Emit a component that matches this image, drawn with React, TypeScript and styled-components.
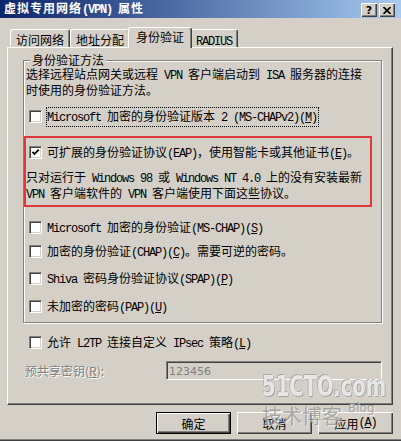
import React from 'react';
import styled, { createGlobalStyle, css } from 'styled-components';

const FACE = '#d4d0c8';

const GlobalStyle = createGlobalStyle`
  html, body {
    margin: 0;
    padding: 0;
    background: ${FACE};
  }
  body {
    font-family: "Noto Sans CJK SC", "DejaVu Sans", sans-serif;
    font-size: 12px;
  }
`;

const Window = styled.div`
  position: relative;
  width: 401px;
  height: 441px;
  overflow: hidden;
  display: flex;
  flex-direction: column;
  background: ${FACE};
  box-shadow: inset 0 -1px 0 #404040, inset 0 -2px 0 #808080;
  color: #000;
  font-family: "Noto Sans CJK SC", sans-serif;
  font-size: 12px;
  line-height: 13px;
`;

const TitleBar = styled.div`
  flex: none;
  height: 18px;
  display: flex;
  align-items: center;
  padding: 0 6px 0 4px;
  background: linear-gradient(to right, #0a246a, #a6caf0);
`;

const Title = styled.div`
  flex: 1;
  color: #fff;
  font-weight: bold;
  letter-spacing: 1px;
  white-space: nowrap;
`;

const CaptionButtons = styled.div`
  display: flex;
  gap: 2px;
  margin-top: 2px;
`;

const CaptionButton = styled.div`
  width: 16px;
  height: 14px;
  box-sizing: border-box;
  display: flex;
  align-items: center;
  justify-content: center;
  background: ${FACE};
  box-shadow: inset 1px 1px 0 #fff, inset -1px -1px 0 #404040, inset -2px -2px 0 #808080;
  font-family: "DejaVu Sans", sans-serif;
  font-weight: bold;
  font-size: 11px;
  line-height: 11px;
`;

const TabRow = styled.div`
  flex: none;
  position: relative;
  z-index: 1;
  display: flex;
  align-items: flex-end;
  height: 20px;
  margin-top: 9px;
  padding-left: 10px;
`;

const Tab = styled.div<{ $active?: boolean }>`
  height: 18px;
  box-sizing: border-box;
  padding: 3px 5px 0;
  background: ${FACE};
  border-top: 1px solid #fff;
  border-left: 1px solid #fff;
  border-right: 1px solid #404040;
  border-radius: 3px 3px 0 0;
  box-shadow: inset -1px 0 0 #808080;
  white-space: nowrap;
  ${p =>
    p.$active &&
    css`
      position: relative;
      z-index: 2;
      height: 21px;
      margin: 0 -2px -1px;
      padding: 2px 7px 0;
    `}
`;

const Panel = styled.div`
  flex: none;
  height: 358px;
  box-sizing: border-box;
  margin: 0 8px 0 7px;
  padding: 12px 10px 0 15px;
  display: flex;
  flex-direction: column;
  border-top: 1px solid #fff;
  border-left: 1px solid #fff;
  border-right: 1px solid #404040;
  border-bottom: 1px solid #404040;
  box-shadow: inset -1px -1px 0 #808080;
`;

const GroupBox = styled.div`
  position: relative;
  display: flex;
  flex-direction: column;
  padding: 6px 0 7px;
  border: 1px solid #808080;
  box-shadow: inset 1px 1px 0 #fff, 1px 1px 0 #fff;
`;

const Legend = styled.span`
  position: absolute;
  top: -7px;
  left: 6px;
  padding: 0 2px;
  line-height: 12px;
  background: ${FACE};
  white-space: nowrap;
`;

const Text = styled.div<{ $ml?: number; $mt?: number }>`
  margin-left: ${p => p.$ml ?? 0}px;
  margin-top: ${p => p.$mt ?? 0}px;
  white-space: nowrap;
`;

const CheckRow = styled.div<{ $mt?: number; $ml?: number }>`
  display: flex;
  align-items: center;
  gap: 4px;
  height: 17px;
  margin-top: ${p => p.$mt ?? 0}px;
  padding-left: ${p => p.$ml ?? 5}px;
`;

const Box = styled.span`
  flex: none;
  width: 13px;
  height: 13px;
  box-sizing: border-box;
  display: flex;
  align-items: center;
  justify-content: center;
  background: #fff;
  border-top: 1px solid #808080;
  border-left: 1px solid #808080;
  border-right: 1px solid #fff;
  border-bottom: 1px solid #fff;
  box-shadow: inset 1px 1px 0 #404040, inset -1px -1px 0 ${FACE};
`;

const Label = styled.span<{ $focus?: boolean }>`
  padding: 1px 1px 1px 0;
  border: 1px ${p => (p.$focus ? 'dotted #000' : 'solid transparent')};
  white-space: nowrap;
`;

const Highlight = styled.div`
  width: 348px;
  box-sizing: border-box;
  margin-top: 11px;
  padding: 6px 0 3px;
  border: 2px solid #e0393c;
`;

const KeyRow = styled.div`
  display: flex;
  align-items: center;
  justify-content: space-between;
  margin-top: 10px;
  padding-left: 2px;
`;

const KeyLabel = styled.span`
  color: #808080;
  text-shadow: 1px 1px 0 #fff;
`;

const KeyInput = styled.div`
  width: 216px;
  height: 19px;
  box-sizing: border-box;
  padding: 3px 2px 0;
  border-top: 1px solid #808080;
  border-left: 1px solid #808080;
  border-right: 1px solid #fff;
  border-bottom: 1px solid #fff;
  box-shadow: inset 1px 1px 0 #404040, inset -1px -1px 0 ${FACE};
  color: #808080;
  font-family: "DejaVu Sans", sans-serif;
  font-size: 11px;
  line-height: 13px;
`;

const ButtonRow = styled.div`
  display: flex;
  justify-content: flex-end;
  gap: 6px;
  margin-top: 7px;
  padding-right: 8px;
`;

const Button = styled.div<{ $default?: boolean }>`
  width: 75px;
  height: 22px;
  box-sizing: border-box;
  display: flex;
  align-items: center;
  justify-content: center;
  background: ${FACE};
  box-shadow: inset 1px 1px 0 #fff, inset -1px -1px 0 #404040, inset -2px -2px 0 #808080;
  ${p =>
    p.$default &&
    css`
      border: 1px solid #000;
    `}
`;

const Lat = styled.span<{ $u?: boolean }>`
  font-family: "Liberation Mono", monospace;
  font-size: 12px;
  letter-spacing: -1.2px;
  text-decoration: ${p => (p.$u ? 'underline' : 'none')};
`;

const Watermark = styled.div`
  position: absolute;
  left: 262px;
  top: 373px;
  z-index: 5;
  pointer-events: none;
  display: flex;
  flex-direction: column;
  gap: 4px;
`;

const WmLogo = styled.div`
  font-family: "DejaVu Sans", sans-serif;
  font-weight: bold;
  font-size: 28px;
  line-height: 28px;
  color: rgba(244, 244, 244, 0.85);
  text-shadow: -1px -1px 0 rgba(140, 140, 140, 0.6), 1px 1px 0 rgba(130, 130, 130, 0.6);
  transform: scaleX(0.7);
  transform-origin: left center;
  white-space: nowrap;
`;

const WmSub = styled.div`
  display: flex;
  align-items: flex-start;
  gap: 6px;
`;

const WmBlog = styled.span<{ $small?: boolean }>`
  font-family: ${p => (p.$small ? '"DejaVu Sans", sans-serif' : '"Noto Sans CJK SC", sans-serif')};
  font-size: ${p => (p.$small ? 12 : 20)}px;
  line-height: ${p => (p.$small ? 12 : 22)}px;
  margin-top: ${p => (p.$small ? -3 : 0)}px;
  color: rgba(140, 140, 140, 0.7);
  text-shadow: 1px 1px 0 rgba(255, 255, 255, 0.6);
  white-space: nowrap;
`;

// SimSun-like text: ASCII runs get a narrow mono face, "&X" underlines X
function sim(text: string) {
  const parts = text.match(/&.|[\x20-\x25\x27-\x7e]+|[^\x20-\x7e]+/g) || [];
  return parts.map((p, i) => {
    if (p[0] === '&') return <Lat key={i} $u>{p[1]}</Lat>;
    if (/^[\x20-\x7e]+$/.test(p)) return <Lat key={i}>{p}</Lat>;
    return <React.Fragment key={i}>{p}</React.Fragment>;
  });
}

const Check = () => (
  <svg width="9" height="9" viewBox="0 0 9 9">
    <path d="M1.5 3.8 L3.5 6 L7.8 1.6" fill="none" stroke="#000" strokeWidth="1.8" />
  </svg>
);

interface CheckItemProps {
  label: string;
  checked?: boolean;
  focus?: boolean;
  mt?: number;
  ml?: number;
}

const CheckItem: React.FC<CheckItemProps> = ({ label, checked, focus, mt, ml }) => (
  <CheckRow $mt={mt} $ml={ml}>
    <Box>{checked && <Check />}</Box>
    <Label $focus={focus}>{sim(label)}</Label>
  </CheckRow>
);

export default function App() {
  return (
    <Window>
      <GlobalStyle />
      <TitleBar>
        <Title>{sim('虚拟专用网络(VPN) 属性')}</Title>
        <CaptionButtons>
          <CaptionButton>?</CaptionButton>
          <CaptionButton>
            <svg width="8" height="7" viewBox="0 0 8 7">
              <path d="M0.5 0 L7.5 7 M7.5 0 L0.5 7" stroke="#000" strokeWidth="1.6" />
            </svg>
          </CaptionButton>
        </CaptionButtons>
      </TitleBar>

      <TabRow>
        <Tab>访问网络</Tab>
        <Tab>地址分配</Tab>
        <Tab $active>身份验证</Tab>
        <Tab>{sim('RADIUS')}</Tab>
      </TabRow>

      <Panel>
        <GroupBox>
          <Legend>身份验证方法</Legend>
          <Text $ml={2}>
            {sim('选择远程站点网关或远程 VPN 客户端启动到 ISA 服务器的连接')}
            <br />
            时使用的身份验证方法。
          </Text>
          <CheckItem mt={12} focus label="Microsoft 加密的身份验证版本 2 (MS-CHAPv2)(&M)" />
          <Highlight>
            <CheckItem ml={3} checked label="可扩展的身份验证协议(EAP)，使用智能卡或其他证书(&E)。" />
            <Text $mt={9}>
              {sim('只对运行于 Windows 98 或 Windows NT 4.0 上的没有安装最新')}
              <br />
              {sim('VPN 客户端软件的 VPN 客户端使用下面这些协议。')}
            </Text>
          </Highlight>
          <CheckItem mt={12} label="Microsoft 加密的身份验证(MS-CHAP)(&S)" />
          <CheckItem mt={7} label="加密的身份验证(CHAP)(&C)。需要可逆的密码。" />
          <CheckItem mt={10} label="Shiva 密码身份验证协议(SPAP)(&P)" />
          <CheckItem mt={11} label="未加密的密码(PAP)(&U)" />
        </GroupBox>

        <CheckItem mt={11} ml={6} label="允许 L2TP 连接自定义 IPsec 策略(&L)" />
        <KeyRow>
          <KeyLabel>
            预共享密钥(<u>R</u>):
          </KeyLabel>
          <KeyInput>123456</KeyInput>
        </KeyRow>
      </Panel>

      <ButtonRow>
        <Button $default>确定</Button>
        <Button>取消</Button>
        <Button>{sim('应用(&A)')}</Button>
      </ButtonRow>

      <Watermark>
        <WmLogo>51CTO.com</WmLogo>
        <WmSub>
          <WmBlog>技术博客</WmBlog>
          <WmBlog $small>Blog</WmBlog>
        </WmSub>
      </Watermark>
    </Window>
  );
}
